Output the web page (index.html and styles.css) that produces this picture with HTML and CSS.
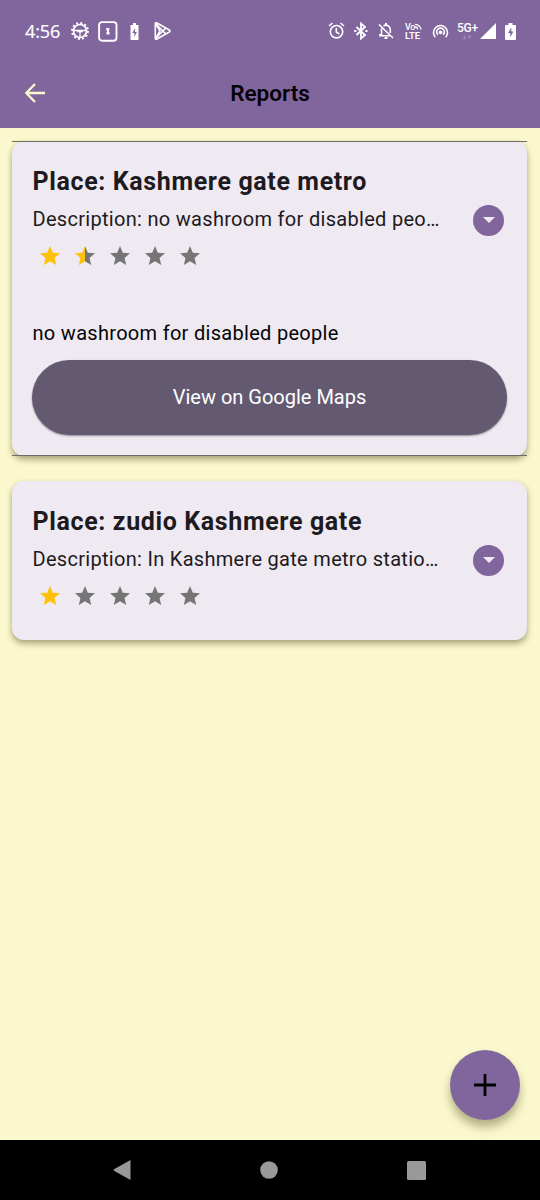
FILE: index.html
```html
<!DOCTYPE html>
<html lang="en">
<head>
<meta charset="utf-8">
<title>Reports</title>
<link rel="stylesheet" href="styles.css">
</head>
<body>
<svg class="defs" width="0" height="0">
  <defs>
    <path id="star" d="M12 17.27 18.18 21l-1.64-7.03L22 9.24l-7.19-.61L12 2 9.19 8.63 2 9.24l5.46 4.73L5.82 21z"/>
    <linearGradient id="half"><stop offset="50%" stop-color="#ffc107"/><stop offset="50%" stop-color="#757575"/></linearGradient>
  </defs>
</svg>
<div class="screen">
  <header class="top">
    <div class="status">
      <span class="time">4:56</span>
      <div class="group notifications">
        <svg width="20" height="20" viewBox="0 0 20 20" fill="none" stroke="#fff"><circle cx="10" cy="10" r="6.500" stroke-width="1.700"/><circle cx="10" cy="10" r="8" stroke-width="1.900" stroke-dasharray="2.100 2.090"/><path d="M3.500 9.500h13M10 9.500v7M7.200 10.500h5.600" stroke-width="1.300"/></svg>
        <svg width="20" height="21" viewBox="0 0 20 21"><rect x="1.100" y="1.100" width="17.400" height="18.600" rx="3" fill="none" stroke="#fff" stroke-width="1.900"/><path d="M8.300 7h3v2.500h-.5v1.500h.7v2.500H8.500v-2.500h.5V9.500h-.7z" fill="#fff"/></svg>
        <svg width="9" height="17" viewBox="0 0 9 17"><path d="M3 0h3v2h2.500v15h-8V2H3z" fill="#fff"/><path d="M5.100 5 2.300 10h2v4l2.600-5H5z" fill="#80669d"/></svg>
        <svg width="18" height="20" viewBox="0 0 18 20" fill="none" stroke="#fff" stroke-width="1.600" stroke-linejoin="round"><path d="M1.300 2.700v14.600q.2 1.500 1.700.7l12.300-7q1.300-1 0-2L3 2Q1.500 1.200 1.300 2.700zM2 3l9.800 10M2 17l9.800-10M2 3l4 7-4 7"/></svg>
      </div>
      <div class="group system">
        <svg width="17" height="18" viewBox="0 0 17 18" fill="none" stroke="#fff" stroke-width="1.600"><circle cx="8.500" cy="9.700" r="6.200"/><path d="M8.300 6v4l3 2M1 4l3.500-3M16 4l-3.500-3"/></svg>
        <svg width="14" height="18" viewBox="0 0 14 18" fill="none" stroke="#fff" stroke-width="1.800"><path d="m2.500 5 8.500 8-4 3.500v-15L11 5l-8.500 8"/><path d="M.2 9h2.200M11.300 9h2.200" stroke-width="2.200"/></svg>
        <svg width="16" height="18" viewBox="0 0 16 18" fill="none" stroke="#fff" stroke-width="1.600"><path d="M1 2.500 15 16M3.500 6.500v6.200H2v1.100h10M5.500 4Q8 2.300 10.500 4 12.300 5.300 12.300 8v3"/><path d="M8 1v2M6.500 16h3" stroke-width="2"/></svg>
        <span class="volte"><span class="vo">Vo<svg width="7" height="7" viewBox="0 0 8 7" fill="none" stroke="#fff" stroke-width="1.400"><path d="M0 4q3 0 3 3M0 1q6 .5 7 6"/></svg></span><span class="lte">LTE</span></span>
        <svg width="17" height="17" viewBox="0 0 17 17" fill="none" stroke="#fff" stroke-width="1.600"><path d="M3.300 14.200a7 7 0 1 1 10.400 0M5.800 11.800a3.900 3.900 0 1 1 5.400 0"/><circle cx="8.500" cy="9.300" r="1.900" fill="#fff" stroke="none"/></svg>
        <span class="network"><span>5G+</span><svg width="10" height="5" viewBox="0 0 10 5"><path d="M2.500 0v4M.8 2.500l1.700 1.800 1.700-1.800M7.500 4V0M5.800 2l1.700-1.800L9.200 2" fill="none" stroke="#a18bb8"/></svg></span>
        <svg width="16" height="16" viewBox="0 0 16 16"><path d="M0 16 16 0v16z" fill="#fff"/></svg>
        <svg width="11" height="17" viewBox="0 0 11 17"><path d="M3.500 0h4v2H10q1 0 1 1v13q0 1-1 1H1q-1 0-1-1V3q0-1 1-1h2.500z" fill="#fff"/><path d="M6.300 4.500 3 10h2.200v4.300L8.400 8.600H6.300z" fill="#80669d"/></svg>
      </div>
    </div>
    <div class="appbar">
      <svg width="22" height="22" viewBox="0 0 22 22" fill="none" stroke="#fdf9cf" stroke-width="2.300"><path d="M21 11H3M11 2 2.300 11l8.700 9"/></svg>
      <h1>Reports</h1>
    </div>
  </header>
  <main class="content">
    <article class="card open">
      <div class="summary">
        <div class="info">
          <h2>Place: Kashmere gate metro</h2>
          <p class="description">Description: no washroom for disabled peo…</p>
          <div class="stars"><svg viewBox="0 0 24 24"><use href="#star" fill="#ffc107"/></svg><svg viewBox="0 0 24 24"><use href="#star" fill="url(#half)"/></svg><svg viewBox="0 0 24 24"><use href="#star"/></svg><svg viewBox="0 0 24 24"><use href="#star"/></svg><svg viewBox="0 0 24 24"><use href="#star"/></svg></div>
        </div>
        <div class="toggle"><svg width="12" height="6" viewBox="0 0 12 6"><path d="M0 0h12L6 6z" fill="#efe9f2"/></svg></div>
      </div>
      <p class="detail">no washroom for disabled people</p>
      <div class="maps">View on Google Maps</div>
    </article>
    <article class="card">
      <div class="summary">
        <div class="info">
          <h2>Place: zudio Kashmere gate</h2>
          <p class="description">Description: In Kashmere gate metro statio…</p>
          <div class="stars"><svg viewBox="0 0 24 24"><use href="#star" fill="#ffc107"/></svg><svg viewBox="0 0 24 24"><use href="#star"/></svg><svg viewBox="0 0 24 24"><use href="#star"/></svg><svg viewBox="0 0 24 24"><use href="#star"/></svg><svg viewBox="0 0 24 24"><use href="#star"/></svg></div>
        </div>
        <div class="toggle"><svg width="12" height="6" viewBox="0 0 12 6"><path d="M0 0h12L6 6z" fill="#efe9f2"/></svg></div>
      </div>
    </article>
    <div class="fab"><svg width="22" height="22" viewBox="0 0 22 22"><path d="M11 0v22M0 11h22" stroke="#000" stroke-width="2.800"/></svg></div>
  </main>
  <nav class="navbar">
    <svg width="18" height="20" viewBox="0 0 18 20"><path d="M17.500 0v20L1 10.700q-1-.7 0-1.400z" fill="#999"/></svg>
    <svg width="18" height="18" viewBox="0 0 18 18"><circle cx="9" cy="9" r="8.800" fill="#999"/></svg>
    <svg width="19" height="19" viewBox="0 0 19 19"><rect width="19" height="19" rx="1.500" fill="#999"/></svg>
  </nav>
</div>
</body>
</html>
```
FILE: styles.css
```css
* { box-sizing: border-box; }
body { margin: 0; font-family: Roboto, sans-serif; }
h1, h2, p { margin: 0; white-space: nowrap; }
svg { display: block; flex: none; }
.defs { position: absolute; }
.screen { width: 540px; height: 1200px; display: flex; flex-direction: column; background: #fbf8cd; }
.top { height: 128px; background: #80669d; }
.status { height: 62px; display: flex; align-items: center; padding-left: 25px; color: #fff; }
.time { width: 45px; font: 18px "Open Sans", sans-serif; letter-spacing: -0.1px; -webkit-text-stroke: 0.2px #fff; }
.group { display: flex; align-items: center; }
.notifications svg:nth-child(2) { margin-left: 7.5px; }
.notifications svg:nth-child(3) { margin-left: 12.5px; }
.notifications svg:nth-child(4) { margin-left: 14.5px; }
.system { margin-left: 156.5px; }
.system > :nth-child(2) { margin-left: 9px; }
.system > :nth-child(3) { margin-left: 10px; }
.volte { width: 17px; margin-left: 11px; font-weight: 500; font-size: 9px; line-height: 8px; }
.vo { display: flex; letter-spacing: -0.3px; }
.lte { display: block; font-size: 9.5px; font-weight: 600; line-height: 9px; letter-spacing: -0.1px; }
.system > :nth-child(5) { margin-left: 10px; }
.network { width: 22px; height: 18px; margin-left: 8px; font-size: 12px; line-height: 14px; font-weight: 500; letter-spacing: -0.5px; }
.network span { display: block; height: 11px; line-height: 12px; letter-spacing: -0.3px; }
.network svg { margin: 2px 0 0 5px; }
.system > :nth-child(7) { margin-left: 1px; }
.system > :nth-child(8) { margin-left: 8.5px; }
.appbar { height: 62px; display: flex; align-items: center; padding-left: 24px; }
.appbar h1 { width: 448px; text-align: center; font-size: 22.5px; font-weight: 600; color: #050207; }
.content { flex: 1; padding: 13px 13px 0 12px; position: relative; }
.card { height: 159px; padding: 25.5px 20px 0 20.5px; background: #efe9f2; border-radius: 12px; box-shadow: 0 4px 6px rgba(70, 65, 25, .38), 0 1px 4px rgba(70, 65, 25, .15); color: #1d1a20; }
.card.open { height: 315px; padding-top: 25px; margin-bottom: 24.5px; position: relative; }
.card.open::before, .card.open::after { content: ""; position: absolute; left: 0; right: 0; height: 1px; background: #716a6b; }
.card.open::before { top: 0; }
.card.open::after { bottom: 0; }
.summary { display: flex; justify-content: space-between; height: 113px; }
h2 { font-size: 25px; line-height: 32px; font-weight: 700; letter-spacing: 0.63px; }
.description { margin-top: 8px; font-size: 20px; line-height: 26px; letter-spacing: 0.3px; }
.stars { display: flex; gap: 11px; margin: 12px 0 0 5px; }
.stars svg { width: 24px; height: 24px; fill: #757575; }
.toggle { width: 31px; height: 31px; margin: 38.5px 3px 0 0; border-radius: 50%; background: #80669d; display: grid; place-items: center; }
.detail { margin-top: 41px; color: #050506; font-size: 20px; line-height: 26px; letter-spacing: 0.3px; }
.maps { height: 75px; margin: 13.5px 0 0 -0.5px; border-radius: 38px; background: #635a72; color: #fff; font-size: 20px; line-height: 24px; padding-bottom: 1px; display: grid; place-items: center; box-shadow: 0 1px 2px rgba(0, 0, 0, .4); }
.fab { position: absolute; right: 20px; bottom: 20px; width: 70px; height: 70px; border-radius: 50%; background: #80669d; display: grid; place-items: center; box-shadow: 0 7px 10px rgba(70, 65, 25, .4); }
.navbar { height: 60px; display: flex; align-items: center; justify-content: space-between; padding: 0 114px 0 112.5px; background: #000; }
```
